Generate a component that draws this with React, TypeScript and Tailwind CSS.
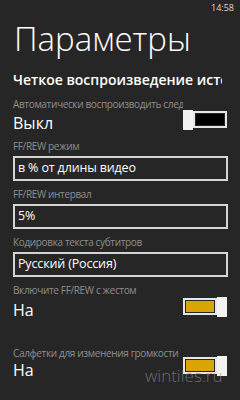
import React from "react";

function Toggle({ on, className = "" }: { on: boolean; className?: string }) {
  const thumb = <div className="w-[10px] h-[20px] bg-[#f2f2f2]" />;
  const track = (
    <div className="w-[34px] h-[17px] border-2 border-[#e6e6e6] p-[1px]">
      <div className={on ? "w-full h-full bg-[#d9a406]" : "w-full h-full bg-black"} />
    </div>
  );
  return (
    <div className={"flex items-center shrink-0 " + className}>
      {on ? (
        <>
          {track}
          {thumb}
        </>
      ) : (
        <>
          {thumb}
          {track}
        </>
      )}
    </div>
  );
}

function Label({ children }: { children: React.ReactNode }) {
  return (
    <div className="h-[13px] leading-[13px] text-[10px] tracking-[-0.35px] text-[#8f8f8f] whitespace-nowrap overflow-hidden">
      {children}
    </div>
  );
}

function Field({ label, value }: { label: string; value: string }) {
  return (
    <div className="flex flex-col">
      <div className="mb-[3px]">
        <Label>{label}</Label>
      </div>
      <div className="h-[25px] border-2 border-[#d4d4d4] flex items-center pl-[3px] pt-[1px] text-[12.5px] tracking-[-0.15px] text-white whitespace-nowrap overflow-hidden">
        {value}
      </div>
    </div>
  );
}

export default function App() {
  return (
    <div
      className="relative w-[240px] h-[400px] bg-[#262626] overflow-hidden text-white"
      style={{ fontFamily: "'Open Sans', 'Noto Sans', sans-serif" }}
    >
      <div className="flex justify-end pt-[3px] pr-[6px] h-[12px]">
        <span className="text-[9px] leading-[9px] text-[#d8d8d8]">14:58</span>
      </div>
      <div className="pl-[14px] mt-[11px] text-[33px] leading-[32px] font-light whitespace-nowrap">
        Параметры
      </div>
      <div className="ml-[13px] mt-[17px] w-[209px] overflow-hidden whitespace-nowrap text-[14px] leading-[16px] font-semibold">
        Четкое воспроизведение источника
      </div>

      <div className="pr-[12px] pl-[13px] mt-[9.5px] flex flex-col">
        <div className="flex items-end pr-[1px]">
          <div className="flex-1 min-w-0 overflow-hidden">
            <Label>Автоматически воспроизводить следующее</Label>
            <div className="mt-[2px] text-[16px] leading-[20px]">Выкл</div>
          </div>
          <Toggle on={false} className="mb-[3px]" />
        </div>

        <div className="mt-[7px] flex flex-col gap-[7px]">
          <Field label="FF/REW режим" value="в % от длины видео" />
          <Field label="FF/REW интервал" value="5%" />
          <Field label="Кодировка текста субтитров" value="Русский (Россия)" />
        </div>

        <div className="mt-[7px] flex items-end pr-[1px]">
          <div className="flex-1 min-w-0 overflow-hidden">
            <Label>Включите FF/REW с жестом</Label>
            <div className="mt-[3px] text-[16px] leading-[20px]">На</div>
          </div>
          <Toggle on={true} className="mb-[3px]" />
        </div>

        <div className="mt-[27px] flex items-end pr-[1px]">
          <div className="flex-1 min-w-0 overflow-hidden">
            <Label>Салфетки для изменения громкости</Label>
            <div className="mt-[0px] text-[16px] leading-[20px]">На</div>
          </div>
          <Toggle on={true} className="mb-[4px]" />
        </div>
      </div>

      <div className="absolute left-[145px] top-[366px] text-[17px] leading-[20px] font-light text-[#8a8a8a] opacity-70">
        wintiles.ru
      </div>
    </div>
  );
}
